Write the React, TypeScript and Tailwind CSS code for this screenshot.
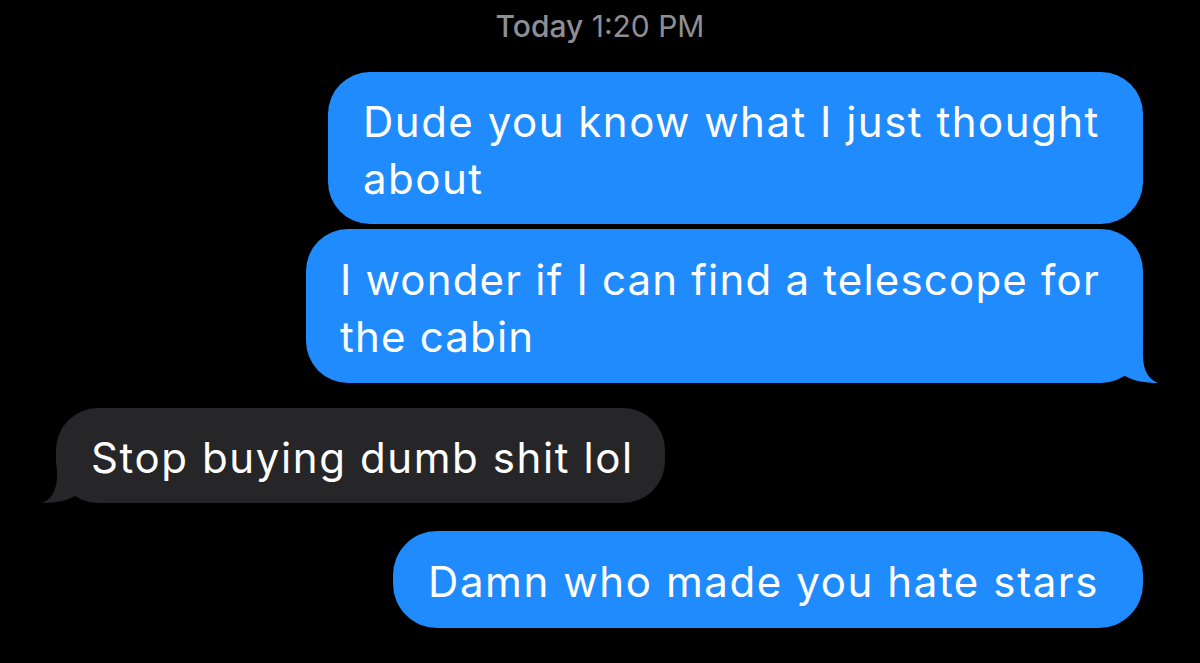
import React from "react";

const BLUE = "#1f8bfd";

function TailRight() {
  return (
    <svg
      className="absolute right-[-15px] bottom-0"
      width="40"
      height="45"
      viewBox="0 0 40 45"
    >
      <path
        d="M7 38 C16 43 27 45 40 45 C31 42 25 32 25 18 L25 5 L0 5 L0 37 Z"
        fill={BLUE}
      />
    </svg>
  );
}

function TailLeft() {
  return (
    <svg
      className="absolute left-[-14px] bottom-0 -scale-x-100"
      width="40"
      height="45"
      viewBox="0 0 40 45"
    >
      <path
        d="M7 38 C16 43 27 45 40 45 C31 42 25 32 25 18 L25 5 L0 5 L0 37 Z"
        fill="#262629"
      />
    </svg>
  );
}

export default function App() {
  return (
    <div
      className="w-[1200px] h-[663px] bg-black overflow-hidden flex flex-col text-white"
      style={{ fontFamily: "Inter, 'Noto Sans', sans-serif" }}
    >
      <div className="pt-[11px] text-center text-[30px] leading-[30px] text-[#8e8e93] tracking-[0px]">
        <span className="font-medium">Today</span>{" "}
        <span className="font-normal">1:20 PM</span>
      </div>

      <div className="flex flex-col items-end pr-[57px] mt-[31px]">
        <div className="relative w-[815px] rounded-[42px] bg-[#1f8bfd] pl-[35px] pr-[10px] pt-[21px] pb-[17px] text-[42px] leading-[57px] whitespace-nowrap tracking-[1.5px]">
          Dude you know what I just thought
          <br />
          about
        </div>
        <div className="relative mt-[5px] w-[837px] rounded-[42px] bg-[#1f8bfd] pl-[34px] pr-[10px] pt-[22px] pb-[18px] text-[42px] leading-[57px] whitespace-nowrap tracking-[1.2px]">
          I wonder if I can find a telescope for
          <br />
          the cabin
          <TailRight />
        </div>
      </div>

      <div className="flex pl-[56px] mt-[25px]">
        <div className="relative w-[609px] rounded-[42px] bg-[#262629] pl-[35px] pr-[10px] pt-[21px] pb-[17px] text-[42px] leading-[57px] whitespace-nowrap tracking-[1.6px]">
          Stop buying dumb shit lol
          <TailLeft />
        </div>
      </div>

      <div className="flex justify-end pr-[57px] mt-[28px]">
        <div className="relative w-[750px] rounded-[44px] bg-[#1f8bfd] pl-[35px] pr-[10px] pt-[22px] pb-[18px] text-[42px] leading-[57px] whitespace-nowrap tracking-[1.6px]">
          Damn who made you hate stars
        </div>
      </div>
    </div>
  );
}
